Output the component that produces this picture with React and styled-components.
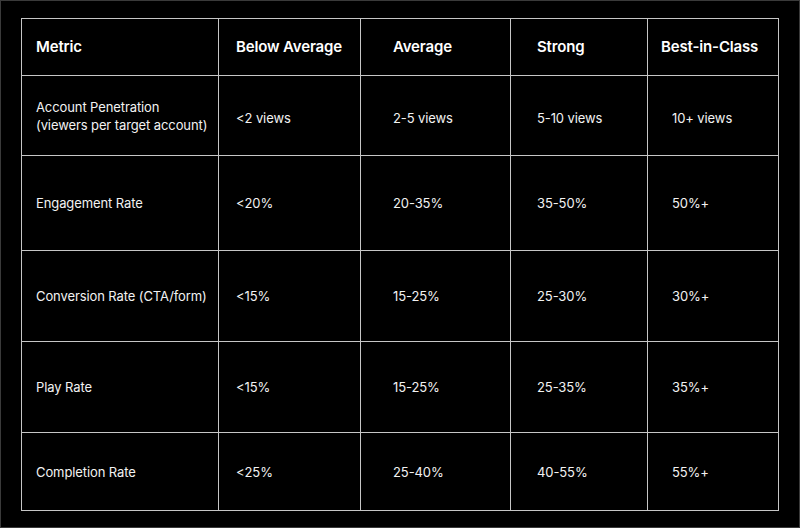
import React from "react";
import styled, { createGlobalStyle } from "styled-components";

const GlobalStyle = createGlobalStyle`
  html, body {
    margin: 0;
    padding: 0;
    background: #000;
  }
`;

const Frame = styled.div`
  width: 800px;
  height: 528px;
  box-sizing: border-box;
  border: 1px solid #3a3a3a;
  background: #000;
  padding: 17px 0 0 20px;
  font-family: Inter, "Liberation Sans", sans-serif;
  color: #f2f2f2;
`;

const Grid = styled.div`
  display: grid;
  grid-template-columns: 196px 141px 149px 136px 130px;
  grid-template-rows: 56px 79px 94px 90px 90px 77px;
  gap: 1px;
  padding: 1px;
  width: fit-content;
  background: #c6c6c6;
`;

const Cell = styled.div`
  background: #000;
  display: flex;
  align-items: center;
  padding-left: ${(props) => props.pad}px;
  padding-top: ${(props) => props.shift || 0}px;
  font-size: 13px;
  line-height: 18px;
  font-weight: 400;
  letter-spacing: -0.1px;
`;

const HeadCell = styled(Cell)`
  font-size: 15px;
  font-weight: 600;
  color: #fff;
  letter-spacing: -0.15px;
`;

const headPads = [14, 17, 32, 26, 13];
const bodyPads = [14, 17, 32, 26, 24];

const headers = ["Metric", "Below Average", "Average", "Strong", "Best-in-Class"];

const rows = [
  [
    <>
      Account Penetration
      <br />
      (viewers per target account)
    </>,
    "<2 views",
    "2-5 views",
    "5-10 views",
    "10+ views",
  ],
  ["Engagement Rate", "<20%", "20-35%", "35-50%", "50%+"],
  ["Conversion Rate (CTA/form)", "<15%", "15-25%", "25-30%", "30%+"],
  ["Play Rate", "<15%", "15-25%", "25-35%", "35%+"],
  ["Completion Rate", "<25%", "25-40%", "40-55%", "55%+"],
];

const App = () => {
  return (
    <>
      <GlobalStyle />
      <Frame>
        <Grid>
          {headers.map((h, i) => (
            <HeadCell key={h} pad={headPads[i]}>
              {h}
            </HeadCell>
          ))}
          {rows.map((row, r) =>
            row.map((value, c) => (
              <Cell
                key={`${r}-${c}`}
                pad={bodyPads[c]}
                shift={r === 0 && c > 0 ? 4 : 0}
              >
                <span>{value}</span>
              </Cell>
            ))
          )}
        </Grid>
      </Frame>
    </>
  );
};

export default App;
